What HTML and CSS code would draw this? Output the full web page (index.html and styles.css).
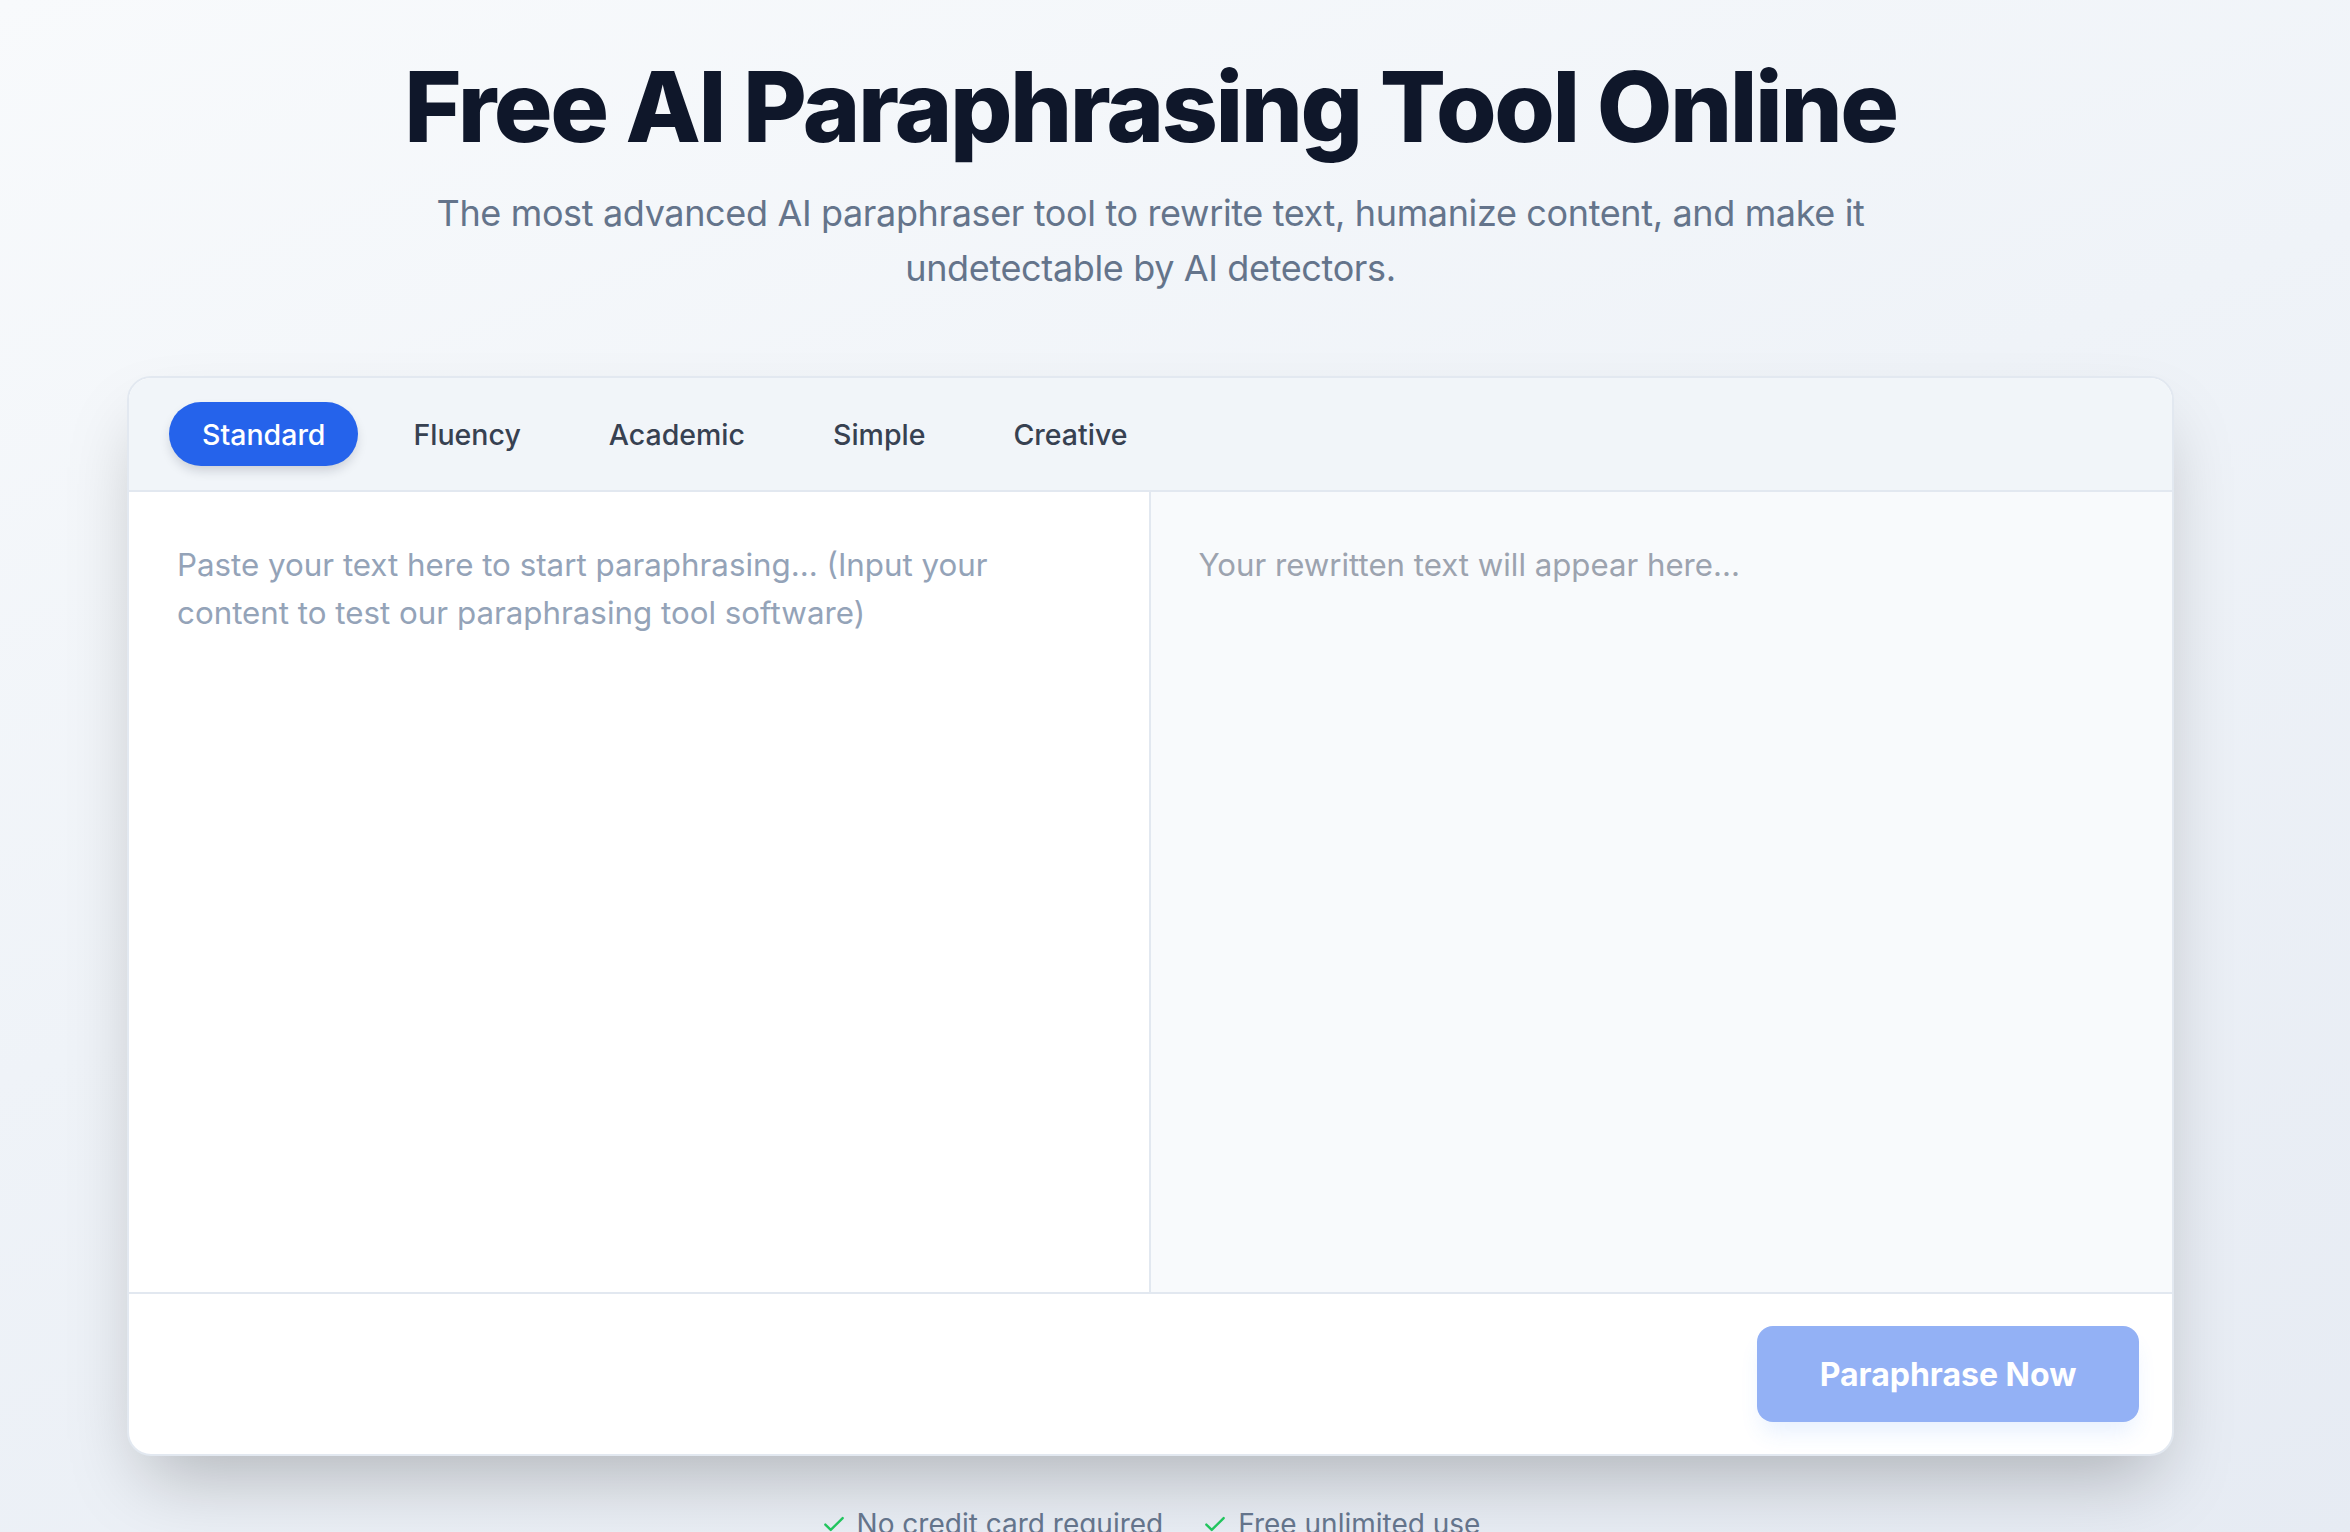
FILE: index.html
```html
<!DOCTYPE html>
<html lang="en">
<head>
<meta charset="utf-8">
<title>Free AI Paraphrasing Tool Online</title>
<link rel="stylesheet" href="styles.css">
</head>
<body>
<main class="page">
  <section class="hero">
    <h1 class="title">Free AI Paraphrasing Tool Online</h1>
    <p class="subtitle">The most advanced AI paraphraser tool to rewrite text, humanize content, and make it<br>undetectable by AI detectors.</p>
  </section>
  <section class="card">
    <div class="tabs">
      <button class="tab tab-active">Standard</button>
      <button class="tab">Fluency</button>
      <button class="tab">Academic</button>
      <button class="tab">Simple</button>
      <button class="tab">Creative</button>
    </div>
    <div class="panes">
      <textarea class="input" placeholder="Paste your text here to start paraphrasing... (Input your content to test our paraphrasing tool software)"></textarea>
      <div class="output"><span class="output-placeholder">Your rewritten text will appear here...</span></div>
    </div>
    <div class="actions">
      <button class="go" disabled>Paraphrase Now</button>
    </div>
  </section>
  <ul class="perks">
    <li class="perk"><svg class="check" viewBox="0 0 24 24" width="26" height="26"><path d="M4 12.5l5 5L20 6.5" fill="none" stroke="#22c55e" stroke-width="2.2" stroke-linecap="round" stroke-linejoin="round"/></svg>No credit card required</li>
    <li class="perk"><svg class="check" viewBox="0 0 24 24" width="26" height="26"><path d="M4 12.5l5 5L20 6.5" fill="none" stroke="#22c55e" stroke-width="2.2" stroke-linecap="round" stroke-linejoin="round"/></svg>Free unlimited use</li>
  </ul>
</main>
</body>
</html>
```
FILE: styles.css
```css
* { box-sizing: border-box; }
html, body { margin: 0; padding: 0; }
body {
  min-height: 1532px;
  background: linear-gradient(160deg, #f8fafc 0%, #eff3f8 45%, #e6ebf3 100%);
  font-family: Inter, "Noto Sans", sans-serif;
  overflow: hidden;
}
.page {
  padding: 0 176px 0 127px;
  display: flex;
  flex-direction: column;
}
.hero {
  display: flex;
  flex-direction: column;
  align-items: center;
  padding-top: 53px;
}
.title {
  margin: 0;
  font-size: 98px;
  line-height: 108px;
  font-weight: 800;
  letter-spacing: -0.025em;
  color: #0f172a;
}
.subtitle {
  margin: 25px 0 0;
  font-size: 36px;
  line-height: 55px;
  font-weight: 400;
  color: #64748b;
  text-align: center;
  letter-spacing: -0.01em;
}
.card {
  margin-top: 80px;
  width: 2047px;
  height: 1080px;
  background: #fff;
  border: 2px solid #e2e8f0;
  border-radius: 24px;
  box-shadow: 0 37px 75px -18px rgba(0, 0, 0, 0.25);
  display: flex;
  flex-direction: column;
  overflow: hidden;
}
.tabs {
  display: flex;
  gap: 22px;
  padding: 24px 40px;
  background: #f1f5f9;
  border-bottom: 2px solid #e2e8f0;
}
.tab {
  height: 64px;
  padding: 0 33px;
  border: 0;
  border-radius: 32px;
  background: transparent;
  font-family: inherit;
  font-size: 28.5px;
  font-weight: 500;
  color: #374151;
  display: flex;
  align-items: center;
}
.tab-active {
  background: #2563eb;
  color: #fff;
  box-shadow: 0 6px 12px -2px rgba(15, 23, 42, 0.18);
}
.panes {
  height: 802px;
  display: grid;
  grid-template-columns: 1fr 1fr;
  border-bottom: 2px solid #e2e8f0;
}
.input {
  resize: none;
  border: 0;
  border-right: 2px solid #e2e8f0;
  outline: none;
  padding: 49px 120px 48px 48px;
  margin: 0;
  font-family: inherit;
  font-size: 31.3px;
  line-height: 48px;
  color: #0f172a;
  background: #fff;
}
.input::placeholder { color: #94a3b8; opacity: 1; }
.output {
  padding: 49px 48px 48px;
  background: #f8fafc;
  font-size: 31.2px;
  line-height: 48px;
}
.output-placeholder { color: #9ca3af; }
.actions {
  flex: 1;
  display: flex;
  justify-content: flex-end;
  align-items: center;
  padding: 0 33px;
}
.go {
  width: 382px;
  height: 96px;
  border: 0;
  border-radius: 16px;
  background: #93b1f5;
  color: #fff;
  font-family: inherit;
  font-size: 32px;
  font-weight: 700;
  box-shadow: 0 15px 22px -5px rgba(59, 130, 246, 0.12);
}
.perks {
  list-style: none;
  margin: 48px 0 0;
  padding: 0;
  display: flex;
  justify-content: center;
  gap: 39px;
  width: 2047px;
}
.perk {
  display: flex;
  align-items: center;
  gap: 10px;
  font-size: 28px;
  line-height: 40px;
  color: #64748b;
}
.check { flex: none; }
```
